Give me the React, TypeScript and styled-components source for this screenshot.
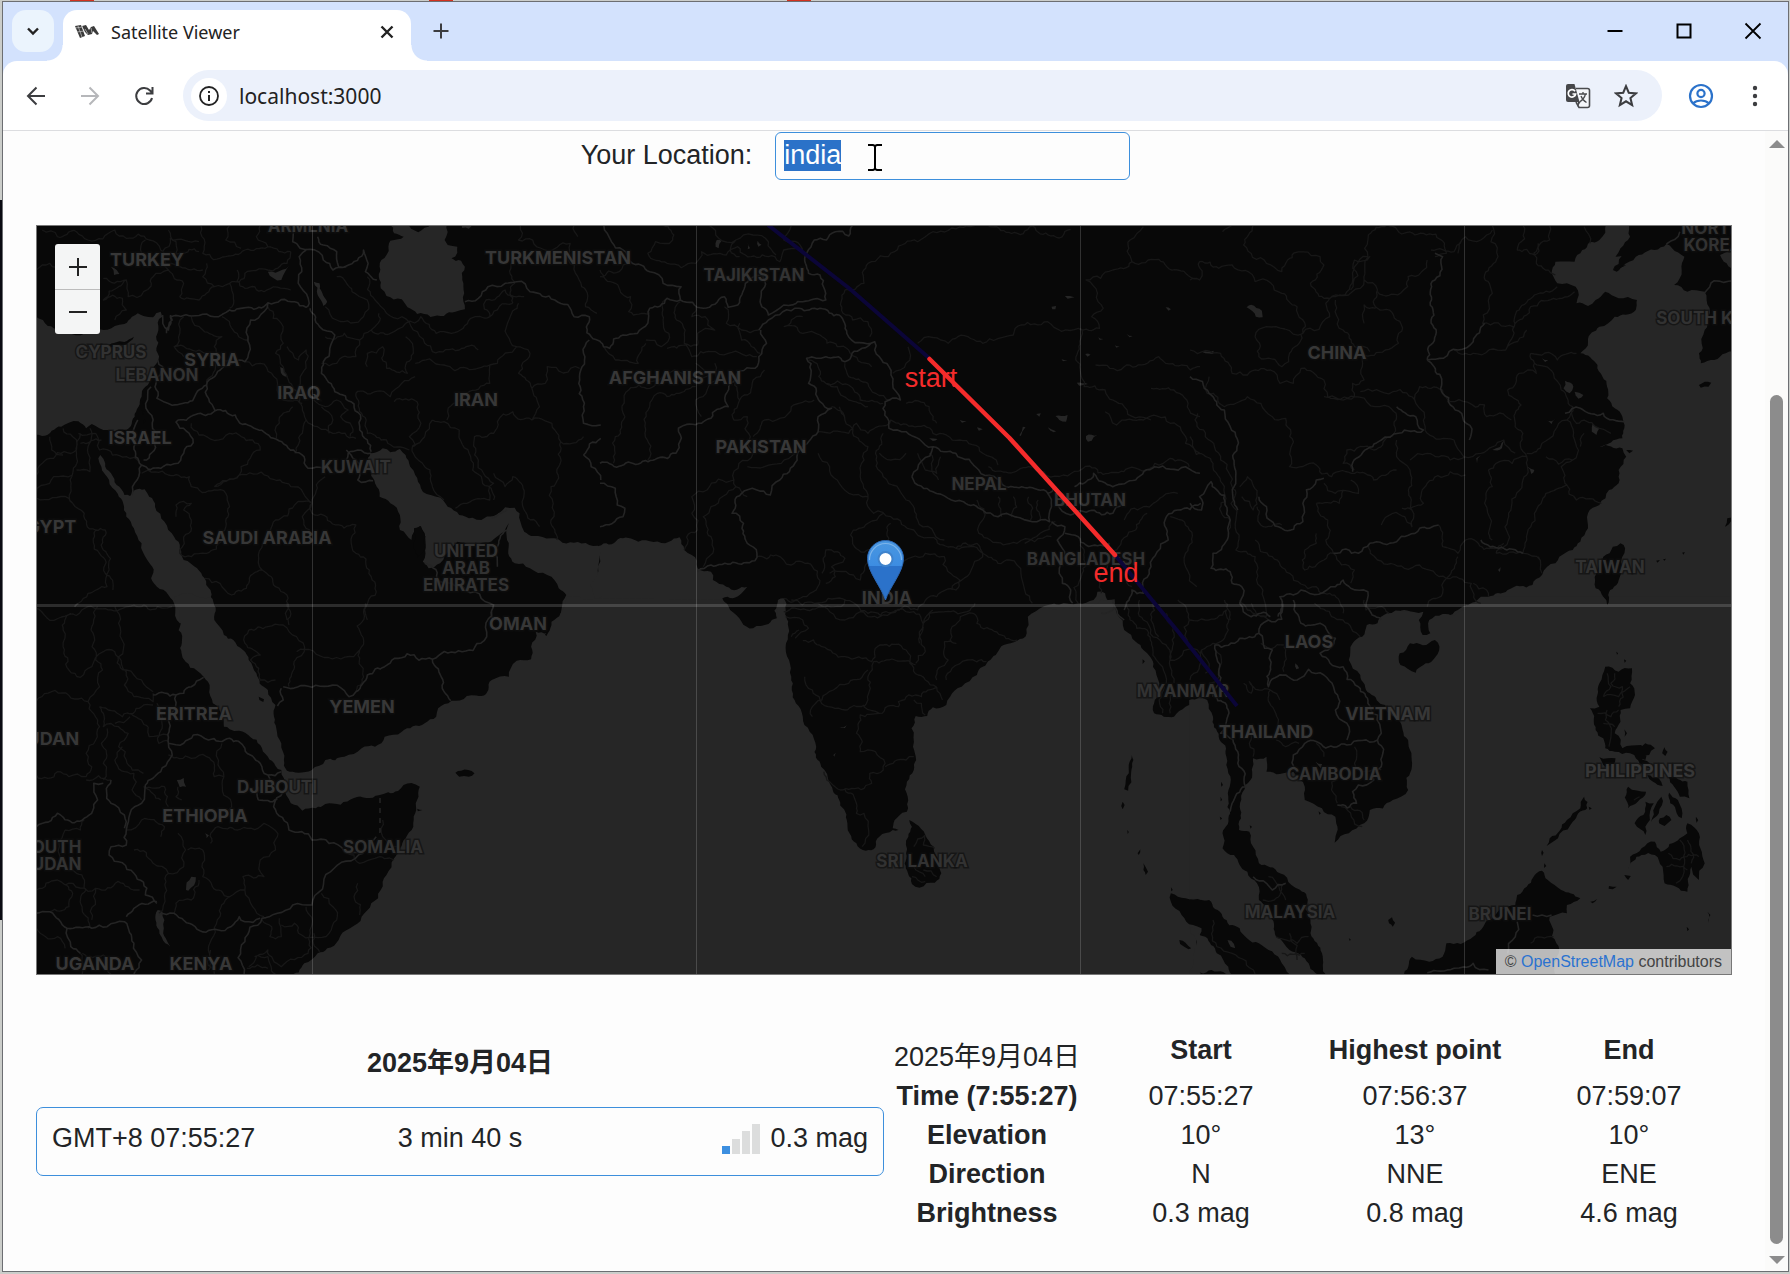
import React, { useEffect, useRef } from "react";
import styled, { createGlobalStyle } from "styled-components";

const SANS = `"Liberation Sans", Arial, "Noto Sans CJK SC", sans-serif`;
const CHROME = `"Noto Sans", "Open Sans", sans-serif`;

const GlobalStyle = createGlobalStyle`
  *, *::before, *::after { box-sizing: border-box; }
  body {
    margin: 0;
    font-family: ${SANS};
    color: #222426;
  }
  button { font: inherit; color: inherit; border: 0; padding: 0; background: none; cursor: pointer; }
`;

/* ---------- window ---------- */

const Desktop = styled.div`
  min-height: 100vh;
  padding: 1px 1px 2px 2px;
  display: flex;
  background:
    linear-gradient(#d2311f, #d2311f) 70px 0 / 24px 1px no-repeat,
    linear-gradient(#d2311f, #d2311f) 429px 0 / 24px 1px no-repeat,
    linear-gradient(#d2311f, #d2311f) 787px 0 / 24px 1px no-repeat,
    linear-gradient(#0a0a12, #0a0a12) 0 200px / 3px 720px no-repeat,
    #cbcdca;
`;

const Window = styled.div`
  flex: 1;
  display: flex;
  flex-direction: column;
  border: 1px solid #6c6e72;
  background: #d3e2fd;
`;

const TabStrip = styled.div`
  display: flex;
  align-items: flex-end;
  height: 59px;
  padding: 0 1px 0 9px;
`;

const TabSearch = styled.button`
  display: grid;
  place-items: center;
  width: 42px;
  height: 42px;
  margin-bottom: 9px;
  border-radius: 14px;
  background: #ebf4fd;
`;

const Tab = styled.div`
  position: relative;
  display: flex;
  align-items: center;
  width: 348px;
  height: 51px;
  margin-left: 9px;
  padding: 0 10px 8px 12px;
  gap: 12px;
  border-radius: 14px 14px 0 0;
  background: #fff;
  font: 18px/26px ${CHROME};
  color: #222;

  &::before,
  &::after {
    content: "";
    position: absolute;
    bottom: 0;
    width: 16px;
    height: 16px;
  }
  &::before { right: 100%; background: radial-gradient(circle at 0 0, transparent 15px, #fff 16px); }
  &::after { left: 100%; background: radial-gradient(circle at 100% 0, transparent 15px, #fff 16px); }
`;

const TabTitle = styled.span`
  flex: 1;
`;

const IconButton = styled.button<{ $w?: number }>`
  display: grid;
  place-items: center;
  width: ${(p) => p.$w ?? 28}px;
  height: 28px;
  svg { display: block; }
`;

const NewTab = styled(IconButton)`
  margin: 0 0 16px 16px;
`;

const WindowControls = styled.div`
  display: flex;
  margin-left: auto;
  margin-bottom: 16px;
`;

const Toolbar = styled.div`
  display: flex;
  align-items: center;
  height: 70px;
  padding: 0 19px 0 6px;
  border-radius: 14px 14px 0 0;
  border-bottom: 1px solid #dcdde0;
  background: #fff;
`;

const AddressBar = styled.div`
  flex: 1;
  display: flex;
  align-items: center;
  height: 51px;
  margin: 0 25px 0 12px;
  padding: 0 22px 0 8px;
  border-radius: 26px;
  background: #ecf1fb;
`;

const SiteInfo = styled.button`
  display: grid;
  place-items: center;
  width: 36px;
  height: 36px;
  border-radius: 50%;
  background: #fff;
`;

const Address = styled.input`
  flex: 1;
  min-width: 0;
  padding: 0 12px;
  border: 0;
  outline: 0;
  background: none;
  font: 21px/30px ${CHROME};
  color: #222;
`;

const AddressActions = styled.div`
  display: flex;
  gap: 20px;
`;

const ToolbarEnd = styled.div`
  display: flex;
  gap: 26px;
`;

/* ---------- page ---------- */

const Viewport = styled.div`
  flex: 1;
  display: flex;
  background: #fdfdfd;
`;

const Page = styled.main`
  flex: 1;
  min-width: 0;
  padding: 1px 33px 0;
  font-size: 27px;
`;

const ScrollTrack = styled.div`
  display: flex;
  flex-direction: column;
  align-items: center;
  width: 23px;
  padding: 9px 0 7px;
  background: #fbfbfa;
`;

const ScrollArrow = styled.div<{ $down?: boolean }>`
  border: solid transparent;
  border-width: 0 8px;
  ${(p) => (p.$down ? "border-top: 8px solid #8c8c8c;" : "border-bottom: 8px solid #8c8c8c;")}
`;

const ScrollThumb = styled.div`
  width: 13px;
  flex: 775;
  margin-bottom: 12px;
  border-radius: 7px;
  background: #8c8c8c;
`;

const ScrollGap = styled.div`
  flex: 225;
`;

const LocationForm = styled.form`
  display: flex;
  justify-content: center;
  align-items: flex-start;
  gap: 23px;
  padding-right: 57px;
  margin-bottom: 45px;
`;

const LocationLabel = styled.label`
  line-height: 47px;
`;

const LocationField = styled.div`
  position: relative;
  display: flex;
`;

const LocationInput = styled.input`
  width: 355px;
  height: 48px;
  padding: 0 8px 2px;
  border: 1px solid #3d8fdc;
  border-radius: 6px;
  outline: 0;
  background: #fdfdfd;
  color: inherit;
  font: 27px/31px ${SANS};
  &::selection { background: #2b72c8; color: #fff; }
`;

const TextCursor = styled.svg`
  position: absolute;
  left: 93px;
  top: 12px;
`;

const MapFrame = styled.section`
  position: relative;
  height: 750px;
  overflow: hidden;
  border: 1px solid #777;
  background: #080808;
`;

const MapCanvas = styled.svg`
  display: block;
  width: 100%;
  height: 100%;
`;

const ZoomControl = styled.div`
  position: absolute;
  left: 18px;
  top: 18px;
  width: 45px;
  border-radius: 3px;
  overflow: hidden;
  background: #f4f5f5;
`;

const ZoomButton = styled.button`
  display: grid;
  place-items: center;
  width: 45px;
  height: 45px;
  & + & { border-top: 1px solid #bcbcbc; }
`;

const Attribution = styled.div`
  position: absolute;
  right: 0;
  bottom: 0;
  padding: 0 9px;
  background: rgba(255, 255, 255, 0.72);
  font-size: 16px;
  line-height: 25px;
  color: #444;
  a { color: #2b72d0; text-decoration: none; }
`;

const Passes = styled.div`
  display: grid;
  grid-template-columns: 1fr 1fr;
  padding-top: 56px;
`;

const PassList = styled.section`
  padding-top: 13px;
`;

const DayHeading = styled.h2`
  margin: 0 0 24px;
  font-size: 27px;
  line-height: 39px;
  text-align: center;
`;

const PassCard = styled.button`
  display: grid;
  grid-template-columns: 1fr auto 1fr;
  align-items: center;
  width: 100%;
  height: 69px;
  padding: 0 15px 6px;
  border: 1px solid #3d8fdc;
  border-radius: 7px;
  line-height: 39px;
  text-align: left;
`;

const Magnitude = styled.span`
  display: flex;
  justify-content: flex-end;
  align-items: center;
  gap: 10px;
`;

const Bars = styled.span`
  display: flex;
  align-items: flex-end;
  gap: 2px;
`;

const Bar = styled.span<{ $h: number; $on?: boolean }>`
  width: 8px;
  height: ${(p) => p.$h}px;
  background: ${(p) => (p.$on ? "#3d8fe0" : "#dcdddd")};
`;

const PassDetails = styled.section`
  margin: 0 -4px;
`;

const PassTable = styled.table`
  width: 100%;
  table-layout: fixed;
  border-collapse: collapse;
  line-height: 39px;
  text-align: center;
  td, th { padding: 0; }
  thead tr { height: 46px; }
  thead th { vertical-align: top; }
  thead td { vertical-align: bottom; }
`;

/* ---------- map geometry ---------- */

// Each tile is digitised on its own grid; `ox`/`oy` is its origin on the map.
const KX = 600 / 1568;
const KY = 1 / 3;
const TILES = {
  a: [0, 220], b: [600, 220], c: [1190, 220],
  d: [0, 600], e: [600, 600], f: [1190, 600],
} as const;
type TileId = keyof typeof TILES;
type Shapes = Partial<Record<TileId, string[]>>;

// Midpoint displacement makes coast and border lines ragged in a repeatable way.
function trace(tile: TileId, text: string, rough: number, close: boolean) {
  const [ox, oy] = TILES[tile];
  const n = text.trim().split(/[\s,]+/).map(Number);
  const pts: [number, number][] = [];
  for (let i = 0; i + 1 < n.length; i += 2) pts.push([ox + n[i] * KX, oy + n[i + 1] * KY]);
  if (close) pts.push(pts[0]);
  const noise = (x: number, y: number) => {
    const s = Math.sin(x * 12.9898 + y * 78.233) * 43758.5453;
    return (s - Math.floor(s)) * 2 - 1;
  };
  const out: [number, number][] = [pts[0]];
  const split = (p: [number, number], q: [number, number], depth: number) => {
    const dx = q[0] - p[0];
    const dy = q[1] - p[1];
    const len = Math.hypot(dx, dy);
    const straight = Math.abs(dx) < 1 || Math.abs(dy) < 1;
    if (!depth || len < 5 || rough === 0 || (straight && len > 90)) {
      out.push(q);
      return;
    }
    const k = noise(p[0] + q[0], p[1] + q[1]) * rough;
    const m: [number, number] = [(p[0] + q[0]) / 2 - dy * k, (p[1] + q[1]) / 2 + dx * k];
    split(p, m, depth - 1);
    split(m, q, depth - 1);
  };
  for (let i = 1; i < pts.length; i++) split(pts[i - 1], pts[i], 4);
  return "M" + out.map((p) => `${p[0].toFixed(1)} ${p[1].toFixed(1)}`).join("L") + (close ? "Z" : "");
}

const build = (shapes: Shapes, rough: number, close: boolean) =>
  (Object.keys(shapes) as TileId[]).flatMap((t) => (shapes[t] ?? []).map((s) => trace(t, s, rough, close)));

const WATER: Shapes = {
  a: [
    "90,285 112,300 125,318 140,325 160,335 260,328 300,318 325,312 345,290 360,280 375,288 400,292 408,280 420,275 424,290 412,308 414,330 408,350 414,368 412,400 414,420 402,440 395,470 380,500 370,530 362,560 352,590 342,618 330,630 290,632 270,630 250,618 240,612 225,625 205,604 180,608 160,620 135,632 110,648 90,645",
    "1018,10 1030,40 1055,50 1040,58 1020,62 1015,80 1010,105 992,140 990,170 995,205 1010,228 1050,238 1065,262 1090,282 1125,291 1160,288 1190,275 1215,268 1213,220 1215,140 1205,122 1180,115 1195,98 1195,80 1170,75 1162,60 1168,10",
    "968,700 1000,685 1020,697 1045,687 1060,705 1072,740 1085,765 1100,805 1115,822 1140,830 1170,860 1200,885 1235,893 1258,900 1290,888 1320,862 1345,863 1358,880 1360,905 1370,935 1395,948 1440,955 1470,968 1510,966 1550,978 1572,980 1572,1210 1470,1210 1468,1165 1480,1125 1460,1105 1430,1065 1385,1045 1345,1030 1328,1000 1325,960 1330,910 1318,935 1290,958 1260,968 1230,972 1195,965 1180,985 1150,1030 1120,1045 1105,1025 1112,1000 1112,965 1110,940 1098,918 1082,935 1075,960 1062,945 1045,930 1045,885 1020,850 992,830 980,790 970,760 960,730",
    "262,705 275,730 290,760 305,795 325,825 340,828 352,810 378,808 390,830 405,860 430,905 455,950 470,985 480,1020 515,1045 535,1075 550,1110 556,1210 470,1210 458,1160 440,1125 410,1100 395,1075 398,1040 385,1020 370,970 350,925 330,890 322,850 308,822 285,780 265,740 257,715",
    "700,155 720,158 755,138 745,155 735,180 715,175",
    "820,185 835,190 855,245 845,258 830,225",
    "728,435 740,445 752,470 738,465",
    "290,140 305,150 312,162 298,165",
    "1205,10 1235,10 1225,26 1208,24",
  ],
  b: [
    "-4,978 100,965 180,965 208,952 220,990 240,1005 255,1045 290,1055 295,1080 330,1100 385,1100 370,1120 320,1135 335,1165 365,1210 -4,1210",
    "1120,1200 1150,1165 1250,1150 1290,1140 1300,1115 1320,1120 1338,1150 1342,1210",
    "465,1140 480,1135 484,1205 462,1205",
    "1190,588 1222,585 1218,605 1200,600",
    "1270,648 1300,645 1285,662 1275,665",
    "1180,260 1192,258 1190,268 1182,268", "1215,228 1240,232 1222,236", "1478,262 1492,268 1486,272",
    "1105,620 1112,622 1100,648 1096,646", "1170,622 1192,634 1186,637", "1140,582 1152,580 1148,590",
    "1302,352 1316,357 1306,360", "1268,402 1282,404 1274,410", "1206,418 1222,420 1210,424",
    "1246,488 1275,492 1252,497", "940,600 958,604 946,608", "985,622 1000,628 990,632", "860,655 882,657 870,663",
    "1376,342 1392,348 1384,352", "1345,376 1358,378 1350,383",
    "305,60 318,62 310,85 302,80", "385,65 392,85 386,88", "412,62 422,74 414,80",
  ],
  c: [
    "1088,10 1152,10 1150,50 1125,85 1112,110 1128,108 1105,150 1130,140 1165,110 1230,82 1245,72 1260,85 1292,110 1285,150 1265,195 1300,215 1345,215 1350,240 1355,290 1345,330 1340,385 1330,400 1335,430 1370,420 1400,400 1420,395 1420,1210 640,1210 700,1170 750,1150 780,1130 830,1110 895,1095 920,1065 955,1030 965,1010 1000,990 1020,965 1040,925 1040,880 1070,855 1095,810 1120,790 1120,750 1140,710 1130,685 1070,680 1130,655 1135,625 1130,590 1110,565 1090,535 1090,500 1078,470 1065,435 1020,400 1040,365 1070,320 1110,290 1165,270 1168,240 1120,235 1085,215 1060,240 1040,258 1010,250 1008,200 985,190 960,190 945,160 955,125 1005,125 1025,90 1070,60",
    "1385,105 1420,92 1420,150 1395,125",
    "500,1190 560,1170 600,1185 590,1212 500,1212",
    "148,262 160,254 188,272 190,292 172,290",
    "1052,610 1070,625 1062,645 1050,635", "930,597 945,604 955,598 945,612", "880,738 900,750 892,762",
    "980,482 1002,500 992,520 976,505", "1005,515 1028,525 1015,536", "748,715 760,705 750,730", "790,690 822,660 815,685",
    "30,395 62,392 60,402 40,400", "805,1050 812,1042 810,1056", "920,415 936,420 928,426",
  ],
  d: [
    "455,-10 470,50 475,130 485,185 515,212 532,230 548,265 556,310 580,350 585,380 600,388 625,392 655,412 680,435 700,470 720,498 735,510 745,560 748,585 760,610 790,632 825,625 850,612 890,614 925,594 990,586 1040,573 1075,549 1097,560 1090,600 1085,640 1080,680 1060,715 1045,745 1030,775 1010,825 995,870 970,910 945,950 915,985 885,1020 855,1045 830,1060 795,1090 755,1130 1572,1130 1572,-10 1482,-10 1465,40 1430,100 1400,95 1388,140 1388,178 1350,182 1335,205 1330,230 1285,240 1276,270 1270,282 1220,288 1180,302 1145,325 1140,350 1110,370 1050,395 1005,410 980,440 945,445 900,470 850,480 815,510 780,518 750,512 742,480 735,430 722,385 716,350 720,315 700,270 670,220 650,180 635,150 610,120 585,105 560,60 550,-10",
    "462,540 480,534 486,560 470,562", "412,930 425,935 428,985 445,1040 432,1030 416,990", "500,830 512,832 492,872 486,870", "536,700 546,706 540,715",
  ],
  e: [
    "-4,-4 320,-2 340,30 370,65 400,85 440,72 462,55 462,30 470,-2 480,-2 487,50 492,80 486,130 494,180 500,230 512,310 530,350 548,395 565,440 578,500 600,550 625,600 645,660 652,700 670,730 695,752 720,742 730,710 765,690 780,690 765,685 775,655 790,638 802,635 804,590 802,545 820,510 826,480 818,440 814,385 825,348 855,348 870,322 905,315 915,290 945,260 985,225 1020,180 1055,135 1090,122 1115,100 1120,75 1118,50 1140,35 1175,25 1255,20 1310,-2 1345,-2 1350,40 1370,90 1400,125 1420,150 1445,200 1462,250 1470,280 1450,300 1448,340 1500,350 1530,320 1560,300 1572,295 1572,900 1530,895 1492,880 1492,905 1520,945 1550,975 1572,985 1572,1130 -4,1130",
    "625,382 645,376 640,384", "610,465 616,458 612,470",
  ],
  f: [
    "-2,300 25,290 45,300 60,350 75,410 95,470 100,520 100,600 105,640 85,700 85,745 115,765 150,815 175,850 180,900 210,950 225,1010 260,1050 310,1090 355,1130 275,1130 240,1090 180,1030 130,985 85,950 50,900 -2,898",
    "-2,980 40,1010 70,1060 100,1100 115,1130 -2,1130",
    "200,515 200,470 165,475 158,540 130,620 128,690 155,695 165,740 180,790 235,820 265,855 305,890 315,960 315,1000 345,1060 355,1130 560,1130 580,1070 625,1085 660,1070 670,1030 740,1010 780,960 850,915 855,885 880,860 920,812 935,840 970,870 1020,895 985,915 985,940 940,950 950,990 945,1010 965,1050 960,1130 1420,1130 1420,-10 760,-10 720,30 660,42 625,60 628,100 608,105 598,60 610,35 560,35 515,40 490,70 462,75 450,110 425,130 415,180 445,225 470,280 510,315 545,360 570,420 580,500 570,570 530,600 470,630 455,670 415,700 378,728 380,650 345,625 300,600 300,560 270,515",
    "98,1020 108,1022 118,1045 106,1040", "328,485 345,492 342,505", "275,190 285,205 278,208",
  ],
};

const ISLANDS: Shapes = {
  a: ["285,374 300,368 325,366 350,350 340,364 325,375 305,382 290,382", "1082,925 1100,918 1112,950 1110,985 1092,1012 1080,985", "372,545 380,548 376,556", "370,570 378,575 374,585", "376,598 382,602 374,612"],
  c: [
    "1125,970 1137,985 1130,1040 1108,1100 1090,1155 1080,1130 1060,1105 1062,1060 1080,1010 1105,980",
    "1330,495 1345,485 1362,488 1355,500 1335,503", "1420,890 1404,895 1398,920 1402,918", "1218,1022 1228,1020 1222,1028",
    "1236,1018 1244,1016 1240,1022", "1286,998 1293,996 1290,1004", "1140,690 1158,692 1148,700", "1105,150 1125,138 1140,135 1115,155",
  ],
  d: ["1190,518 1205,512 1240,520 1225,530 1200,530", "676,290 690,298 688,306 678,300", "1436,90 1428,108 1424,104", "1090,626 1104,630 1092,634"],
  e: [
    "808,660 825,672 850,705 872,740 890,790 892,820 875,848 835,863 815,852 805,820 800,760 806,710 815,680",
    "1390,465 1394,480 1388,520 1380,572 1370,568 1374,540 1382,520 1384,485", "1366,605 1371,615 1366,628 1362,618",
    "1420,790 1432,815 1426,825 1420,810", "1412,748 1408,765 1405,760", "1514,1020 1530,1028 1545,1045 1538,1048 1516,1032",
    "1378,690 1382,696 1379,702", "1492,862 1497,870 1493,874", "1418,178 1424,184 1418,192",
  ],
  f: [
    "575,130 640,120 652,140 635,180 590,218 550,195 548,160",
    "1085,200 1120,215 1155,205 1150,250 1163,285 1150,325 1125,330 1125,365 1110,400 1130,445 1180,435 1190,480 1150,460 1110,455 1085,445 1080,415 1060,390 1045,325 1070,320 1070,250",
    "1150,440 1190,430 1215,445 1200,465 1175,470 1205,505 1190,500 1165,475", "1240,442 1248,455 1242,468 1234,460",
    "1070,472 1112,475 1105,495 1085,500", "1135,388 1142,400 1136,410",
    "1030,590 1038,625 1000,665 932,738 940,715 985,660 1020,625",
    "1300,670 1330,700 1345,790 1330,840 1310,800 1300,875 1270,860 1240,850 1235,800 1215,765 1180,765 1145,810 1150,770 1180,745 1215,725 1230,755 1280,715 1300,700",
    "1250,530 1300,545 1305,595 1280,590 1265,560", "1252,578 1275,600 1285,655 1272,640 1255,610",
    "1190,605 1212,610 1202,660 1190,705 1162,670 1185,645", "1232,590 1225,640 1205,665 1215,620",
    "1145,560 1192,575 1170,605 1145,625", "1228,655 1245,645 1258,660 1240,678 1226,670",
    "1195,525 1225,535 1235,558 1210,545", "1135,825 1152,828 1145,840", "1095,858 1115,860 1105,868 1094,866", "1046,905 1064,897 1052,910",
    "518,960 528,952 536,968 530,980 520,970", "415,1015 420,1018 418,1024", "1352,935 1360,945 1354,968", "1298,980 1304,988 1300,994",
    "920,750 924,758 920,768", "926,790 931,798 925,804", "1042,620 1050,625 1044,630", "1322,650 1328,660 1324,668", "1114,155 1119,160 1116,164", "1134,178 1140,182 1136,188",
    "82,545 86,555 82,560", "80,590 84,600 80,604", "78,650 84,655 80,660", "156,676 162,680 158,686", "336,634 342,640 338,644",
  ],
};

const COUNTRY_LINES: Shapes = {
  a: [
    "425,285 440,330 445,290 500,288 540,282 560,290 600,270 650,262 700,248 770,245 800,262 808,250 785,200 782,110 800,90",
    "755,16 765,65 810,88 845,120 870,150 905,138 950,90 962,130 955,155 985,180",
    "700,250 690,275 655,300 648,350 650,400 640,425 540,495 450,556 410,535 405,500 425,440 412,420",
    "540,495 562,572 460,606 505,668 480,700 420,745 370,735 345,825",
    "562,572 615,585 715,655 805,745 850,748",
    "810,265 835,320 875,345 862,385 845,425 840,460 875,515 925,552 942,585 940,630 970,695",
    "395,500 400,600 375,720", "360,600 350,680 370,735", "905,690 930,720 935,780 975,782", "905,720 910,700 935,690 970,700",
    "1215,245 1250,235 1275,200 1320,190 1350,185 1385,215 1450,240 1500,290 1540,290 1545,350 1570,365",
    "1540,360 1525,400 1515,480 1525,560 1525,610 1570,615", "1525,705 1545,740 1570,780", "1570,655 1525,705",
    "1325,930 1295,985 1300,1040", "1110,1030 1150,1085 1210,1100 1290,1155 1290,1200",
    "830,50 845,75 880,95 885,140 905,140",
    "435,340 450,300 445,285", "1285,895 1325,870",
  ],
  b: [
    "10,16 30,65 80,125 130,155 165,190 212,200 210,240 175,235 130,265 125,310 60,345 25,385 0,365",
    "210,240 270,265 325,230 335,262 360,255 380,190 430,170", "425,170 440,285 480,255 530,245 590,240 575,165 545,160 540,100 560,60 615,35 650,48 660,16",
    "415,330 440,300 520,265 575,265 625,285 645,340 718,365 685,385 640,425 590,410 540,415 545,490 575,545 605,565 570,590 570,635 545,665 520,680 495,755 470,780 445,825 370,820 345,880 375,910 385,970 410,1000 405,1022 290,1035 255,1055",
    "420,330 435,370 415,410 405,445 340,490 335,560 290,595 265,610 205,625 198,700 150,715 100,732 0,730",
    "0,790 40,805 45,855 65,865 60,890 0,920",
    "718,365 730,410 755,440 765,490 785,540 745,545 755,625 800,635 870,680 815,770", "870,680 930,700 990,750 1060,800 1170,820 1190,800",
    "815,770 870,815 950,845 1000,870 1040,890 1130,905 1175,905 1180,860 1170,820",
    "1190,800 1195,850 1230,885 1340,880 1365,850", "1180,905 1215,920 1195,960 1215,1010 1200,1060 1230,1110 1235,1150",
    "1240,800 1290,760 1340,800 1400,780 1450,740 1530,740 1568,760", "1480,890 1485,960 1440,1040 1420,1120 1390,1110 1370,1170",
    "1215,940 1250,950 1270,975 1330,970 1345,1010", "1480,890 1510,870 1570,850",
  ],
  c: [
    "0,850 30,870 25,830 55,785 90,825 105,900 100,950 60,1000 55,1045 105,1055 110,1090 135,1100 130,1150 160,1190 210,1190",
    "230,1190 235,1130 270,1125 290,1110 380,1100 400,1080 420,1105 465,1115 460,1160 500,1200",
    "0,470 50,520 90,570 105,620 115,700 120,760 115,800 125,870", "620,420 630,300 640,180 660,110 640,100", "620,420 660,520 710,580 730,660",
    "1345,218 1370,182 1420,182", "1245,72 1280,35", "980,580 1020,565 1080,580 1135,605", "870,1000 760,960",
    "375,1000 440,1000 470,970 540,965 600,925 650,915", "620,420 700,390 740,365 770,310",
    "240,925 295,905 295,850 330,780 350,775", "180,830 200,860 240,925", "540,560 590,590 610,630 545,640 500,660 425,755",
  ],
  d: [
    "400,285 460,285 480,280 500,260 532,232", "460,285 455,330 440,360 440,430 420,515 380,555 370,610 340,640 330,690 330,735 290,740 285,765 350,820 380,885 410,910",
    "440,430 480,430 505,405 545,420 600,415 640,445 680,490 700,525 735,515", "700,525 720,560 740,575 715,620 755,690 815,720 900,755 950,760",
    "950,760 815,915 765,915 725,940 685,955 640,1025 638,1122", "680,955 640,965 625,950 570,990 510,980 455,940 415,945",
    "330,950 350,925 410,905", "95,940 130,935 175,985 240,985 280,980 325,965 350,1030 370,1080 350,1122", "175,985 185,1040 210,1060",
    "95,680 150,640 195,668 220,655 255,600 245,550 270,550", "740,260 815,262 900,272 912,290 930,275 960,225 1005,200 1130,178 1265,122 1290,20",
    "1130,178 1178,302", "735,265 740,300 725,318", "290,540 290,610 325,645 325,685", "675,600 725,598", "675,560 675,600",
    "205,10 195,20",
  ],
  f: [
    "60,290 65,135 130,115 180,100 185,75 205,60 240,58 240,0", "180,100 195,145 215,150 210,200 205,260 250,225 280,240 310,208 350,225 375,260 380,330 410,370 410,420",
    "270,0 290,70 340,70 360,95 380,115 340,160 400,200 440,260 465,310 490,345 500,400 490,420 410,435 300,430 270,465 275,510",
    "490,420 500,500 480,540 440,555 425,575 435,610 385,615", "65,290 100,330 95,365 80,400 125,455 125,490 145,560 110,610 105,635",
    "165,830 200,850 215,870 250,850", "895,945 945,945", "855,965 850,1010 830,1060", "780,1110 740,1090 690,1105 620,1118",
  ],
  e: ["1310,40 1345,20", "1340,0 1370,60"],
};

const REGION_LINES: Shapes = {
  a: [
    "95,150 130,130 160,160 150,190", "270,175 330,180 335,230 375,215 400,170 440,150 430,120", "110,30 150,50 200,35 230,60 300,30 330,55 390,60 420,90 470,100 520,95",
    "525,16 530,100 590,110 640,90 700,80 760,95", "380,60 370,100 410,130 470,140 530,150", "440,150 480,190 470,230 520,240 560,200 600,190 640,160 700,150",
    "560,200 530,170 540,130", "620,150 640,205 690,215 760,210", "600,190 610,235 600,265", "330,180 310,200 270,240 320,235 330,270 300,300",
    "440,30 460,65 450,110", "600,16 590,60 630,85", "680,16 670,50 700,80", "760,95 750,130 700,150", "425,95 445,55 520,65",
    "480,290 470,340 455,380 480,410", "500,290 530,330 580,350 560,380 600,420", "580,290 620,340 650,360", "455,380 520,390 560,420 540,490",
    "700,260 740,320 740,370 720,400 740,440 765,500 790,560 800,600", "640,425 680,430 710,460 725,500 740,540 790,550", "765,560 730,610 722,655", "800,600 790,640 770,700",
    "750,380 780,420 800,390 790,460 800,540", "820,540 850,560 880,540 910,570 890,590 920,620 915,650", "800,600 830,620 870,640 930,655", "840,560 870,600 860,640",
    "850,260 880,300 950,290 960,240 920,215 880,170", "960,170 980,240 1010,280 1050,290 1080,330 1110,370 1130,395 1200,390 1250,390",
    "850,350 900,340 940,360 970,330 990,280", "940,360 930,410 880,430 840,430", "970,330 1020,340 1060,310", "1060,310 1100,290 1140,340 1180,340 1230,295 1280,290 1340,250",
    "1280,290 1270,240 1320,210 1370,230", "1060,350 1080,400 1065,460 1010,445 1000,380 960,400 960,440", "1085,430 1160,435 1280,435 1300,430 1350,380 1330,300 1355,250",
    "1280,435 1280,490 1220,520 1170,575 1168,600", "1350,380 1385,400 1355,460 1390,505 1425,490 1430,440 1515,445", "1390,505 1410,560 1390,600 1340,575 1300,605 1290,640 1240,650 1250,720 1290,790 1280,840 1220,850 1190,865",
    "1390,600 1450,630 1465,665 1525,650", "1465,665 1460,740 1440,800 1440,900 1455,960", "1290,760 1320,800 1340,770 1370,820 1370,870 1410,920",
    "930,520 980,515 1020,530 1050,490 1085,470", "930,520 945,580 960,640 1010,660 1070,690", "1030,545 1090,545 1100,610 1070,650 1080,700 1110,740 1130,800 1160,840",
    "1130,600 1160,605 1200,630 1230,710 1260,780 1290,840", "1130,600 1110,650 1080,680",
    "500,610 520,645 600,640 660,660 680,690 630,740 625,765 560,800", "370,760 440,765 495,770 500,800 560,810 590,820 600,860 590,920 580,960 540,1000 500,1010 470,1000 480,960 500,900 480,870 500,850 460,855 460,890",
    "560,800 625,765 700,768 760,800 815,850 815,880 930,915 930,1000 965,1050 960,1200", "850,770 820,830 815,850 770,855 720,900 690,960 685,1050 650,1090 605,1125 575,1090 535,1075", "815,850 790,890 810,930", "685,1050 720,1100 750,1125 750,1200",
    "95,765 140,715 200,690 210,640", "130,650 135,690 165,705", "165,625 190,650 200,700 190,760 185,800 190,850 220,880 250,930 275,930 270,990 285,1050 280,1100 230,1120 205,1150", "235,625 230,700 235,755 200,750",
    "250,640 260,690 330,710 365,730", "95,820 130,790 140,770 190,765", "95,835 180,835 190,850", "250,930 260,1000 275,1060 295,1110", "205,640 250,640", "210,670 265,660",
    "90,1165 230,1160 350,1155 450,1160", "1360,16 1355,60 1490,70 1485,120 1520,200 1530,260 1560,280", "1340,250 1345,190 1335,130", "1500,16 1510,50",
  ],
  b: [
    "165,16 190,60 145,65 125,100 175,130 250,130 265,95 330,105 360,80 380,105 440,110 470,125 480,90 530,85", "285,16 310,55 355,60 400,45 440,65 460,105", "355,60 340,90 365,110", "500,16 480,60 530,90",
    "80,125 50,155 0,170", "0,150 40,190 80,230 75,275 130,278", "170,240 165,300 180,340 160,380 120,360", "210,245 200,300 220,370 255,375 255,340 300,330 275,290 240,290 250,260",
    "325,260 330,310 370,330 415,330", "365,310 370,360 420,400", "175,385 225,375 240,410 290,395 335,400 410,410", "120,370 100,430 40,420 10,380", "110,470 155,480 195,450 250,480 290,460 250,430",
    "75,510 130,505 150,480", "75,510 65,590 40,650 35,730", "130,560 150,520 200,520 250,500", "130,560 125,720", "300,430 310,480 280,510 250,540 265,590", "350,480 365,540 350,600 385,590 390,660 420,690", "365,540 400,480 430,450",
    "400,650 430,600 500,560 560,540", "390,660 400,700 350,780 355,800 385,830", "350,780 280,810 240,830 240,880 255,930 220,990", "355,800 290,860 270,890 290,950 270,1040", "385,740 430,740 510,700",
    "480,320 530,340 575,345 620,380 650,390 710,440", "480,320 500,300 530,290", "545,420 570,440 590,490 620,500 650,540 700,560", "590,490 650,495 680,540 740,550", "640,430 650,470 700,490 720,520 760,540",
    "570,635 650,640 670,610 700,640 760,600 870,640 940,660 1000,700 1040,735", "605,560 640,600 660,640 700,680 690,720 680,770 700,860 715,880 760,890 820,930 880,960 930,985 985,970", "740,640 720,700 740,770 800,840 830,900 900,960", "640,600 625,560", "570,700 600,740 620,780 650,820 700,830",
    "740,880 700,910 655,945 665,980 720,990 750,970 760,910", "830,700 850,750 880,760 890,710", "860,700 885,780", "800,700 760,720 730,700", "985,840 1000,900 990,940 1020,960 1090,970 1180,950", "1040,830 1050,890", "1080,830 1075,890", "1120,830 1125,900", "1145,840 1150,900", "1015,740 1120,740 1280,738 1380,745 1450,730 1490,715 1540,740",
    "640,210 690,190 700,130 770,95 830,65 870,35 950,22 1020,20 1130,18 1230,28", "640,210 635,280 660,300 700,305 705,350", "830,370 910,370 935,350 1000,370 1080,345 1100,315 1170,305 1250,325 1305,325 1285,290 1315,265 1300,220 1270,180 1340,150 1390,125 1385,60 1420,20", "1390,125 1460,118 1510,150 1568,180",
    "805,380 800,430 765,460", "800,550 860,560 870,600 880,610", "1295,435 1370,440 1400,440 1460,410 1520,435 1568,440", "1440,505 1500,510 1540,570 1568,590", "1320,575 1350,615 1420,600 1490,610 1530,670 1568,700", "1255,325 1255,450 1265,500 1320,510 1370,560 1440,600",
    "580,1060 590,990 620,995 640,1015 605,1040 615,1070 590,1090", "410,1010 460,1005 500,1035 555,1040 565,1110 530,1130 480,1135", "600,1060 680,1080 700,1020 780,1030 850,1000 900,1010 940,1080 930,1110 880,1130 830,1170 700,1180 560,1150 500,1140", "985,970 1000,1010 970,1050 920,1110", "930,985 1040,1030 1070,1020 1100,1060 1110,1110 1130,1150", "1250,950 1260,1060 1250,1150", "1340,1010 1380,1030 1390,1100", "1490,890 1540,930 1530,1000 1560,1100", "1430,880 1400,930 1350,990 1320,1050 1310,1120", "1510,820 1470,830 1420,860 1370,900",
    "1190,905 1150,940 1110,970",
  ],
  c: [
    "85,35 110,16", "165,16 140,75 200,130 240,155 255,120 340,110 350,135 315,190 350,235 410,215 430,140 465,110 465,60 500,20", "500,20 610,40 665,70 670,100 640,110", "0,180 25,180 25,125 75,145 110,135 170,185 240,220 280,260 295,340 200,320 170,350 180,410 240,440 260,400 290,345",
    "295,340 365,290 355,250 380,230 455,180 490,210 490,265 540,300 545,370 510,390 450,400 455,480 425,490 430,530 360,530 350,480 290,445 270,490 235,490 210,450 150,465 110,460 80,400 0,390", "380,240 400,330 430,380 470,395", "455,180 470,110 430,120 420,210", "455,310 455,255 485,265",
    "490,215 550,220 570,170 620,120", "790,16 805,110 770,165 790,220 765,310 845,320 825,390 740,400 690,390", "845,325 860,270 900,225 960,200", "850,310 890,260 950,235 1005,215", "825,390 880,330", "870,16 855,90 900,105 940,60 940,16", "910,70 905,130 955,165", "1030,20 1045,70", "700,100 720,50 760,60 790,30", "630,90 690,95 710,60",
    "890,400 960,420 1010,400", "890,400 900,430 950,460 970,510 1000,560 985,600 920,670 880,700", "860,460 905,460 900,430", "860,460 830,510 865,555 850,610 870,640 880,710 800,730 780,750 790,800 770,850 790,960", "1000,560 1010,610 1060,620 1100,640", "880,710 870,780 840,860 830,900 820,980 800,1000", "985,600 1010,680 1000,720 970,740 985,795 930,820 900,880 880,960 870,1000", "985,795 1010,840 1075,850", "930,710 1000,720", "1030,640 1020,680",
    "445,515 530,515 590,550 600,500 660,510 680,545 770,555 775,590 840,600", "350,530 430,530 520,560 540,590 520,650 480,690 410,690 400,730 430,750", "590,550 610,600 620,640 690,660 715,710 760,700 820,660 850,700", "540,660 540,710 575,750 580,870 555,865 610,850 620,790 680,755 720,765", "575,720 620,700 680,720 720,710",
    "50,470 45,520 90,560 150,530 185,550 215,590 250,595 260,740 330,735 370,770 430,760 480,780 540,750", "20,580 40,650 80,720 110,800 120,900 120,990 170,1010 185,1100 200,1190", "0,650 60,730 90,800 100,930", "130,800 150,770 175,830 165,870 135,830", "175,860 185,915 240,915", "330,850 360,900 355,960 375,1000 350,1020 300,1050 300,990 330,970 330,940", "350,790 380,820 440,820 420,780", "330,850 390,850 400,810", "170,960 215,1010 260,1060 330,1100 400,1180", "375,1000 430,1050 420,1090", "470,970 490,1020 560,1045 600,1035 670,1075 735,1090 760,1150", "670,1075 660,1120 620,1160", "650,915 660,980 700,1000 720,960 820,970", "500,915 530,880 580,920 580,870", "670,1075 700,1010", "910,1010 920,1060", "800,1000 870,1000 915,1020", "740,1090 775,1110 780,1130",
  ],
  d: [
    "185,40 165,90 165,140 180,210 210,232 240,200 270,155 300,155 330,210 370,240 400,275", "255,20 250,180 268,210 260,260 230,305 95,303", "300,20 310,70 310,170 330,215 325,255 350,290 400,305 400,280", "230,305 260,380 250,420 225,460 240,500 225,530 180,530 150,515 125,535 95,525", "260,320 320,350 370,320 400,315", "260,320 270,380 310,380 335,400 310,440 330,480 375,520", "340,340 370,360 390,410 440,405", "280,385 265,430 270,490 270,540", "320,440 300,480 350,520 345,570 370,600", "300,370 340,350", "410,310 415,430 440,425", "225,540 290,540",
    "650,90 640,130 680,165 655,180 680,240 720,240", "650,90 700,80 740,75 775,110 795,155 770,200 755,260", "775,155 940,150 955,10", "940,150 930,275", "755,75 750,10", "440,465 500,475 540,470 560,530 585,530 580,430", "585,530 605,610 600,650", "465,560 460,590 475,600", "375,560 430,560 440,620", "330,690 370,660 430,680 420,710", "420,600 380,560", "465,700 485,750 480,800 440,820 400,790 350,750", "490,750 530,750 530,830 555,860 600,890 640,870 635,830 690,830 680,780 720,750 725,710 690,670 620,690 570,680 550,730", "600,890 575,950 545,1040 560,1122", "640,870 660,920 690,950",
    "95,870 150,840 190,880 180,920 130,935", "170,855 250,865 365,870", "225,870 230,985", "250,865 240,960", "170,690 155,740 200,820 225,870", "95,985 150,1010 170,1045", "210,1060 215,1122", "215,1060 270,1065 290,1122", "685,960 710,980 705,1010 735,1010 730,955", "735,975 770,970 780,1000 860,1000 880,960 870,920 840,880", "800,920 805,1060 735,1100 700,1050 650,1100", "820,1000 835,1055", "935,850 925,890 940,945", "1000,660 1000,710 1040,740", "900,755 940,790 980,775 1030,780", "170,690 210,690 220,660", "440,820 430,890 415,940", "550,1050 545,1110", "645,1105 700,1105", "665,1070 700,1070 720,1122", "455,940 460,910 500,900 520,840",
  ],
  e: [
    "480,35 540,30 600,35 640,60 680,35 740,45 820,35 840,60 835,110 850,155 825,190", "530,122 580,140 640,170 710,185 740,135 800,150 810,190 850,240 880,262 895,300", "825,195 770,180 715,185 700,230 700,300 690,320 730,340 780,320 780,305 840,290 880,262", "640,0 630,20 560,10", "700,210 650,250 610,270 580,300 550,330 555,350", "535,230 555,270 575,300 640,330 690,315", "730,340 680,345 670,400 680,455 720,455 745,490 740,510 705,520 710,550 650,568 600,545 585,515", "745,500 800,480 820,470", "640,568 670,610 670,640 690,640 685,740", "850,345 840,310 820,300", "870,30 845,70 860,40 960,35 980,10", "845,80 835,130", "920,80 975,40 985,70 1090,120", "920,80 915,120 930,130 900,125 910,180 880,240", "905,240 920,205 960,180 1010,185", "520,90 500,110", "485,50 530,60 545,85 510,115", "850,705 820,740", "850,705 845,735 875,745", "820,800 850,830", "845,810 880,830", "815,830 850,845", "1380,0 1385,60 1430,90 1445,150 1470,200 1480,250", "1410,0 1420,60 1470,130 1490,200 1500,250", "1450,0 1440,60 1460,110", "1480,40 1500,100 1490,180 1568,160", "1510,0 1540,60 1550,150", "1475,260 1470,340", "1495,260 1490,340",
  ],
  f: [
    "0,60 40,60 95,30 100,90 60,130 30,150 40,220", "90,0 105,60", "160,10 200,50", "130,0 150,30 205,60", "325,10 370,50 400,60 445,110", "455,0 460,30 520,40", "30,150 10,220 0,240", "65,150 75,230 50,250", "245,140 245,215", "185,130 245,135", "140,250 160,280 155,245 180,270 210,270 220,330 230,370 225,410", "210,270 235,300", "155,380 155,430 165,470", "225,420 250,440 285,430", "430,440 430,490 500,510", "385,530 385,610", "330,430 350,470", "395,620 450,680", "420,620 455,660", "205,830 250,900", "250,850 220,900 190,900", "225,1010 280,1030 310,1010", "260,1000 280,1080", "240,1060 300,1060", "60,960 70,1040 110,1060 170,1122", "1090,220 1100,260 1080,290", "1110,220 1100,250 1130,260 1120,320", "1080,290 1120,290 1150,260", "1065,340 1100,350 1120,330", "1080,370 1110,380", "1090,330 1095,440", "1250,760 1280,780 1330,770", "1280,720 1290,800 1270,850", "1300,720 1310,790", "1245,800 1300,810", "890,1030 950,1010", "1175,590 1160,600",
  ],
};

// Water bodies of neighbouring tiles overlap at the seams, so each stays a path of its own.
const waterPaths = build(WATER, 0.16, true);
const islandPath = build(ISLANDS, 0.16, true).join("");
const countryPath = build(COUNTRY_LINES, 0.2, false).join("");
const regionPath = build(REGION_LINES, 0.22, false).join("");

type Place = { name: string; x: number; y: number; small?: boolean };
const PLACES: Place[] = [
  { name: "ARMENIA", x: 308, y: 232, small: true },
  { name: "TURKEY", x: 147, y: 266 },
  { name: "TURKMENISTAN", x: 558, y: 264 },
  { name: "TAJIKISTAN", x: 754, y: 281, small: true },
  { name: "CYPRUS", x: 111, y: 358, small: true },
  { name: "LEBANON", x: 157, y: 381, small: true },
  { name: "SYRIA", x: 212, y: 366 },
  { name: "IRAQ", x: 299, y: 399 },
  { name: "IRAN", x: 476, y: 406 },
  { name: "AFGHANISTAN", x: 675, y: 384 },
  { name: "ISRAEL", x: 140, y: 444 },
  { name: "KUWAIT", x: 356, y: 473, small: true },
  { name: "PAKISTAN", x: 761, y: 453 },
  { name: "NEPAL", x: 979, y: 490, small: true },
  { name: "BHUTAN", x: 1090, y: 506, small: true },
  { name: "BANGLADESH", x: 1086, y: 565, small: true },
  { name: "CHINA", x: 1337, y: 359 },
  { name: "EGYPT", x: 46, y: 533 },
  { name: "SAUDI ARABIA", x: 267, y: 544 },
  { name: "UNITED", x: 466, y: 557, small: true },
  { name: "ARAB", x: 466, y: 574, small: true },
  { name: "EMIRATES", x: 466, y: 591, small: true },
  { name: "OMAN", x: 518, y: 630 },
  { name: "INDIA", x: 887, y: 604 },
  { name: "TAIWAN", x: 1610, y: 573, small: true },
  { name: "NORTH", x: 1712, y: 234, small: true },
  { name: "KOREA", x: 1713, y: 251, small: true },
  { name: "SOUTH KOREA", x: 1718, y: 324, small: true },
  { name: "ERITREA", x: 194, y: 720 },
  { name: "YEMEN", x: 362, y: 713 },
  { name: "SUDAN", x: 47, y: 745 },
  { name: "DJIBOUTI", x: 277, y: 793, small: true },
  { name: "ETHIOPIA", x: 205, y: 822 },
  { name: "SOMALIA", x: 383, y: 853, small: true },
  { name: "SOUTH", x: 51, y: 853, small: true },
  { name: "SUDAN", x: 51, y: 870, small: true },
  { name: "UGANDA", x: 95, y: 970 },
  { name: "KENYA", x: 201, y: 970 },
  { name: "SRI LANKA", x: 922, y: 867, small: true },
  { name: "MYANMAR", x: 1183, y: 697, small: true },
  { name: "LAOS", x: 1309, y: 648 },
  { name: "VIETNAM", x: 1388, y: 720 },
  { name: "THAILAND", x: 1266, y: 738 },
  { name: "CAMBODIA", x: 1334, y: 780, small: true },
  { name: "PHILIPPINES", x: 1640, y: 777 },
  { name: "MALAYSIA", x: 1290, y: 918, small: true },
  { name: "BRUNEI", x: 1500, y: 920, small: true },
];

const PlaceName = styled.text<{ $small?: boolean }>`
  font: 700 ${(p) => (p.$small ? 17 : 18)}px Inter, "Open Sans", sans-serif;
  fill: ${(p) => (p.$small ? "#323232" : "#373737")};
  stroke: #0f0f0f;
  stroke-width: 3px;
  stroke-opacity: 0.7;
  paint-order: stroke;
  text-anchor: middle;
`;

const TrackLabel = styled.text`
  font: 27px ${SANS};
  fill: #f42b2b;
  text-anchor: middle;
`;

function WorldMap() {
  return (
    <MapCanvas viewBox="37 226 1694 748" preserveAspectRatio="xMidYMid slice" aria-label="Ground track map">
      <defs>
        <linearGradient id="pin" x1="0" y1="0" x2="0" y2="1">
          <stop offset="0" stopColor="#4a97e0" />
          <stop offset="0.42" stopColor="#3d8de2" />
          <stop offset="0.43" stopColor="#2b72ca" />
          <stop offset="1" stopColor="#2b72ca" />
        </linearGradient>
      </defs>
      <g fill="#262626">
        {waterPaths.map((d, i) => (
          <path key={i} d={d} />
        ))}
      </g>
      <path d={islandPath} fill="#080808" />
      <path d={regionPath} fill="none" stroke="#171717" strokeWidth="1.3" strokeLinejoin="round" />
      <path d={countryPath} fill="none" stroke="#242424" strokeWidth="1.6" strokeLinejoin="round" />
      <path d="M380 798V832L372 842" fill="none" stroke="#242424" strokeWidth="1.5" strokeDasharray="5 5" />
      {PLACES.map((p) => (
        <PlaceName key={p.name + p.y} x={p.x} y={p.y} $small={p.small}>
          {p.name}
        </PlaceName>
      ))}
      <path d="M312.5 226V974M696.5 226V974M1080.5 226V974M1464.5 226V974" stroke="#fff" strokeOpacity="0.17" />
      <path d="M37 605.5H1731" stroke="#fff" strokeOpacity="0.15" strokeWidth="3" />
      <path d="M768 225L850 289L929 358M1115 555L1180 634L1237 706" fill="none" stroke="#0b0538" strokeWidth="4" />
      <g>
        <path d="M885.500 600C882 588 867.500 572 867.500 558.500A18 18 0 0 1 903.500 558.500C903.500 572 889 588 885.500 600Z" fill="url(#pin)" stroke="#2a66b4" />
        <path d="M869.500 560A16 16.500 0 0 1 901.500 560" fill="none" stroke="#7db4ea" strokeWidth="1.200" />
        <circle cx="885.500" cy="559" r="7" fill="#fff" stroke="#3f83cc" strokeWidth="2" />
      </g>
      <TrackLabel x={931} y={387}>start</TrackLabel>
      <TrackLabel x={1116} y={582}>end</TrackLabel>
      <path d="M929.500 359L1009.500 438L1115 555" fill="none" stroke="#f42b2b" strokeWidth="4.500" strokeLinecap="round" strokeLinejoin="round" />
    </MapCanvas>
  );
}

/* ---------- icons ---------- */

type GlyphProps = { d: string; size?: number; color?: string; width?: number };
const Glyph = ({ d, size = 20, color = "#3c3d40", width = 2 }: GlyphProps) => (
  <svg width={size} height={size} viewBox="0 0 20 20" fill="none" stroke={color} strokeWidth={width} aria-hidden>
    <path d={d} />
  </svg>
);

const SatelliteIcon = () => (
  <svg width="24" height="14" viewBox="0 0 24 14" aria-hidden>
    <path d="M0 1L6 0L10 11L5 13ZM7 1L11 0L14 5L16 2L19 1L24 9L22 10L18 6L17 9L13 10L10 7Z" fill="#3a3a3a" />
    <path d="M0 3L8 2M2 7L9 6M3 1L7 12M10 4L13 9M16 3L17 8" stroke="#c4c4c4" strokeWidth="0.7" />
  </svg>
);

const TranslateIcon = () => (
  <svg width="26" height="26" viewBox="0 0 26 26" aria-hidden>
    <path d="M11 5.500H22.500A2 2 0 0 1 24.500 7.500V22.500A2 2 0 0 1 22.500 24.500H14L11 19" fill="#f4f6fa" stroke="#4a4b4e" strokeWidth="1.600" />
    <path d="M3 1H9.500L14.500 19H3A2 2 0 0 1 1 17V3A2 2 0 0 1 3 1Z" fill="#46474a" />
    <path d="M13 19H15.500L12.500 24Z" fill="#46474a" />
    <path d="M10 8.200A3.700 3.700 0 1 0 10.600 11H7.500" fill="none" stroke="#fff" strokeWidth="1.700" />
    <path d="M14 11H22M18 9V11M20.500 11C19.500 15 17 17.500 14.500 19M16 13C17 16 19 18 21.500 19.500" fill="none" stroke="#4a4b4e" strokeWidth="1.300" />
  </svg>
);

const ProfileIcon = () => (
  <svg width="26" height="26" viewBox="0 0 26 26" fill="none" stroke="#2b72ca" strokeWidth="2.200" aria-hidden>
    <circle cx="13" cy="13" r="11" />
    <circle cx="13" cy="10.500" r="3.600" />
    <path d="M5 20.500C9 16.500 17 16.500 21 20.500" />
  </svg>
);

const InfoIcon = () => (
  <svg width="22" height="22" viewBox="0 0 22 22" aria-hidden>
    <circle cx="11" cy="11" r="9" fill="none" stroke="#222" strokeWidth="1.800" />
    <path d="M11 10V16M11 6V8" stroke="#222" strokeWidth="2" />
  </svg>
);

/* ---------- data ---------- */

const ROWS = [
  ["Time (7:55:27)", "07:55:27", "07:56:37", "07:59:07"],
  ["Elevation", "10°", "13°", "10°"],
  ["Direction", "N", "NNE", "ENE"],
  ["Brightness", "0.3 mag", "0.8 mag", "4.6 mag"],
];

export default function App() {
  const location = useRef<HTMLInputElement>(null);

  useEffect(() => {
    location.current?.focus();
    location.current?.select();
  }, []);

  return (
    <Desktop>
      <GlobalStyle />
      <Window>
        <TabStrip>
          <TabSearch aria-label="Search tabs">
            <Glyph d="M5 7.500L10 12.500L15 7.500" color="#222" width={2.4} />
          </TabSearch>
          <Tab>
            <SatelliteIcon />
            <TabTitle>Satellite Viewer</TabTitle>
            <IconButton aria-label="Close tab">
              <Glyph d="M4.500 4.500L15.500 15.500M15.500 4.500L4.500 15.500" color="#222" width={2.4} />
            </IconButton>
          </Tab>
          <NewTab aria-label="New tab">
            <Glyph d="M10 2.500V17.500M2.500 10H17.500" />
          </NewTab>
          <WindowControls>
            <IconButton $w={69} aria-label="Minimize">
              <Glyph d="M2.500 10H17.500" color="#000" />
            </IconButton>
            <IconButton $w={69} aria-label="Maximize">
              <Glyph d="M3.500 3.500H16.500V16.500H3.500Z" color="#000" />
            </IconButton>
            <IconButton $w={69} aria-label="Close">
              <Glyph d="M2.500 2.500L17.500 17.500M17.500 2.500L2.500 17.500" color="#000" width={1.8} />
            </IconButton>
          </WindowControls>
        </TabStrip>
        <Toolbar>
          <IconButton $w={54} aria-label="Back">
            <Glyph d="M19 10H2M10.500 1.500L2 10L10.500 18.500" />
          </IconButton>
          <IconButton $w={54} aria-label="Forward">
            <Glyph d="M1 10H18M9.500 1.500L18 10L9.500 18.500" color="#b6b7ba" />
          </IconButton>
          <IconButton $w={54} aria-label="Reload">
            <Glyph d="M18 12A8 8 0 1 1 16 4.500L18 6.500M18.500 1V7.500H12" />
          </IconButton>
          <AddressBar>
            <SiteInfo aria-label="Site information">
              <InfoIcon />
            </SiteInfo>
            <Address aria-label="Address" defaultValue="localhost:3000" />
            <AddressActions>
              <IconButton aria-label="Translate">
                <TranslateIcon />
              </IconButton>
              <IconButton aria-label="Bookmark">
                <Glyph size={24} width={1.7} d="M10 1.800L12.300 7.300L18.300 7.800L13.700 11.700L15.100 17.500L10 14.400L4.900 17.500L6.300 11.700L1.700 7.800L7.700 7.300Z" />
              </IconButton>
            </AddressActions>
          </AddressBar>
          <ToolbarEnd>
            <IconButton aria-label="Profile">
              <ProfileIcon />
            </IconButton>
            <IconButton aria-label="Menu">
              <svg width="6" height="22" viewBox="0 0 6 22" fill="#3c3d40" aria-hidden>
                <circle cx="3" cy="3" r="2.200" />
                <circle cx="3" cy="11" r="2.200" />
                <circle cx="3" cy="19" r="2.200" />
              </svg>
            </IconButton>
          </ToolbarEnd>
        </Toolbar>
        <Viewport>
          <Page>
            <LocationForm onSubmit={(e) => e.preventDefault()}>
              <LocationLabel htmlFor="location">Your Location:</LocationLabel>
              <LocationField>
                <LocationInput id="location" ref={location} defaultValue="india" spellCheck={false} autoComplete="off" />
                <TextCursor width="14" height="27" viewBox="0 0 14 27" fill="none" stroke="#000" strokeWidth="2" aria-hidden>
                  <path d="M0 1H5L7 2L9 1H14M7 2V25M0 26H5L7 25L9 26H14" />
                </TextCursor>
              </LocationField>
            </LocationForm>
            <MapFrame>
              <WorldMap />
              <ZoomControl>
                <ZoomButton aria-label="Zoom in">
                  <Glyph d="M10 1V19M1 10H19" color="#222" />
                </ZoomButton>
                <ZoomButton aria-label="Zoom out">
                  <Glyph d="M1 10H19" color="#222" />
                </ZoomButton>
              </ZoomControl>
              <Attribution>
                © <a href="#osm">OpenStreetMap</a> contributors
              </Attribution>
            </MapFrame>
            <Passes>
              <PassList>
                <DayHeading>2025年9月04日</DayHeading>
                <PassCard>
                  <span>GMT+8 07:55:27</span>
                  <span>3 min 40 s</span>
                  <Magnitude>
                    <Bars>
                      <Bar $h={8} $on />
                      <Bar $h={15} />
                      <Bar $h={23} />
                      <Bar $h={30} />
                    </Bars>
                    0.3 mag
                  </Magnitude>
                </PassCard>
              </PassList>
              <PassDetails>
                <PassTable>
                  <thead>
                    <tr>
                      <td>2025年9月04日</td>
                      <th scope="col">Start</th>
                      <th scope="col">Highest point</th>
                      <th scope="col">End</th>
                    </tr>
                  </thead>
                  <tbody>
                    {ROWS.map(([name, ...cells]) => (
                      <tr key={name}>
                        <th scope="row">{name}</th>
                        {cells.map((c, i) => (
                          <td key={i}>{c}</td>
                        ))}
                      </tr>
                    ))}
                  </tbody>
                </PassTable>
              </PassDetails>
            </Passes>
          </Page>
          <ScrollTrack>
            <ScrollArrow />
            <ScrollGap />
            <ScrollThumb />
            <ScrollArrow $down />
          </ScrollTrack>
        </Viewport>
      </Window>
    </Desktop>
  );
}
